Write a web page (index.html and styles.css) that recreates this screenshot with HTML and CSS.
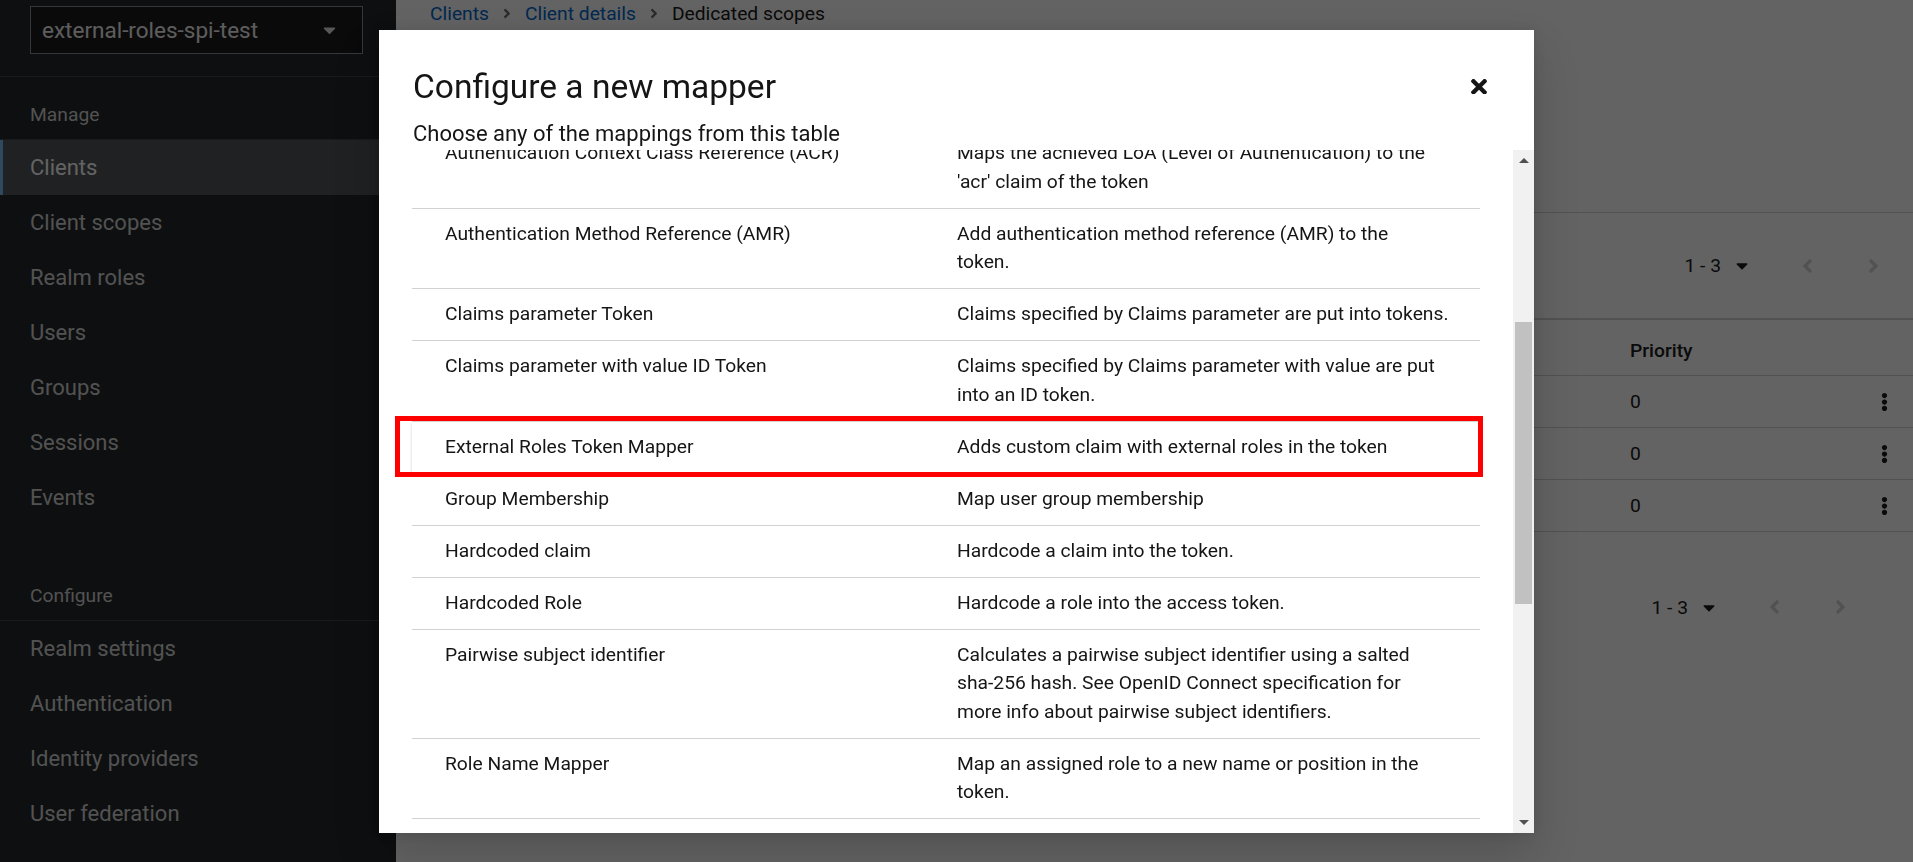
FILE: index.html
```html
<!DOCTYPE html>
<html lang="en">
<head>
<meta charset="utf-8">
<title>Dedicated scopes</title>
<link rel="stylesheet" href="styles.css">
</head>
<body>
<div class="page">
  <aside class="sidebar">
    <div class="realm-wrap">
      <div class="realm-select">
        <span>external-roles-spi-test</span>
        <svg class="caret" viewBox="0 0 320 512"><path d="M31.3 192h257.3c17.8 0 26.7 21.5 14.1 34.1L174.1 354.8c-7.8 7.8-20.5 7.8-28.3 0L17.2 226.1C4.6 213.5 13.5 192 31.3 192z"/></svg>
      </div>
    </div>
    <nav class="nav">
      <section class="nav-group">
        <div class="nav-title">Manage</div>
        <a class="nav-link current">Clients</a>
        <a class="nav-link">Client scopes</a>
        <a class="nav-link">Realm roles</a>
        <a class="nav-link">Users</a>
        <a class="nav-link">Groups</a>
        <a class="nav-link">Sessions</a>
        <a class="nav-link">Events</a>
      </section>
      <section class="nav-group second">
        <div class="nav-title">Configure</div>
        <a class="nav-link">Realm settings</a>
        <a class="nav-link">Authentication</a>
        <a class="nav-link">Identity providers</a>
        <a class="nav-link">User federation</a>
      </section>
    </nav>
  </aside>

  <main class="main">
    <div class="crumbs">
      <a class="crumb-link">Clients</a>
      <svg class="crumb-sep" viewBox="0 0 256 512"><path d="M224.3 273l-136 136c-9.4 9.4-24.6 9.4-33.9 0l-22.6-22.6c-9.4-9.4-9.4-24.6 0-33.9l96.4-96.4-96.4-96.4c-9.4-9.4-9.4-24.6 0-33.9L54.3 103c9.4-9.4 24.6-9.4 33.9 0l136 136c9.5 9.4 9.5 24.6.1 34z"/></svg>
      <a class="crumb-link">Client details</a>
      <svg class="crumb-sep" viewBox="0 0 256 512"><path d="M224.3 273l-136 136c-9.4 9.4-24.6 9.4-33.9 0l-22.6-22.6c-9.4-9.4-9.4-24.6 0-33.9l96.4-96.4-96.4-96.4c-9.4-9.4-9.4-24.6 0-33.9L54.3 103c9.4-9.4 24.6-9.4 33.9 0l136 136c9.5 9.4 9.5 24.6.1 34z"/></svg>
      <span class="crumb-current">Dedicated scopes</span>
    </div>
    <div class="page-header">
      <h1 class="page-title">external-roles-spi-test-dedicated</h1>
    </div>
    <div class="toolbar">
      <div class="pager top">
        <div class="pager-toggle"><span>1 - 3</span>
          <svg class="pg-caret" viewBox="0 0 320 512"><path d="M31.3 192h257.3c17.8 0 26.7 21.5 14.1 34.1L174.1 354.8c-7.8 7.8-20.5 7.8-28.3 0L17.2 226.1C4.6 213.5 13.5 192 31.3 192z"/></svg>
        </div>
        <div class="pg-btn"><svg viewBox="0 0 256 512"><path d="M31.7 239l136-136c9.4-9.4 24.6-9.4 33.9 0l22.6 22.6c9.4 9.4 9.4 24.6 0 33.9L127.9 256l96.4 96.4c9.4 9.4 9.4 24.6 0 33.9L201.7 409c-9.4 9.4-24.6 9.4-33.9 0l-136-136c-9.5-9.4-9.5-24.6-.1-34z"/></svg></div>
        <div class="pg-btn"><svg viewBox="0 0 256 512"><path d="M224.3 273l-136 136c-9.4 9.4-24.6 9.4-33.9 0l-22.6-22.6c-9.4-9.4-9.4-24.6 0-33.9l96.4-96.4-96.4-96.4c-9.4-9.4-9.4-24.6 0-33.9L54.3 103c9.4-9.4 24.6-9.4 33.9 0l136 136c9.5 9.4 9.5 24.6.1 34z"/></svg></div>
      </div>
    </div>
    <div class="mtable">
      <div class="mrow head"><span class="c-name">Name</span><span class="c-prio">Priority</span><span></span></div>
      <div class="mrow"><span class="c-name">acr loa level</span><span class="c-prio">0</span><span class="kebab"><svg viewBox="0 0 192 512"><path d="M96 184c39.8 0 72 32.2 72 72s-32.2 72-72 72-72-32.2-72-72 32.2-72 72-72zM24 80c0 39.8 32.2 72 72 72s72-32.2 72-72S135.8 8 96 8 24 40.2 24 80zm0 352c0 39.8 32.2 72 72 72s72-32.2 72-72-32.2-72-72-72-72 32.2-72 72z"/></svg></span></div>
      <div class="mrow"><span class="c-name">client roles</span><span class="c-prio">0</span><span class="kebab"><svg viewBox="0 0 192 512"><path d="M96 184c39.8 0 72 32.2 72 72s-32.2 72-72 72-72-32.2-72-72 32.2-72 72-72zM24 80c0 39.8 32.2 72 72 72s72-32.2 72-72S135.8 8 96 8 24 40.2 24 80zm0 352c0 39.8 32.2 72 72 72s72-32.2 72-72-32.2-72-72-72-72 32.2-72 72z"/></svg></span></div>
      <div class="mrow"><span class="c-name">external roles</span><span class="c-prio">0</span><span class="kebab"><svg viewBox="0 0 192 512"><path d="M96 184c39.8 0 72 32.2 72 72s-32.2 72-72 72-72-32.2-72-72 32.2-72 72-72zM24 80c0 39.8 32.2 72 72 72s72-32.2 72-72S135.8 8 96 8 24 40.2 24 80zm0 352c0 39.8 32.2 72 72 72s72-32.2 72-72-32.2-72-72-72-72 32.2-72 72z"/></svg></span></div>
    </div>
    <div class="pager bottom">
      <div class="pager-toggle"><span>1 - 3</span>
        <svg class="pg-caret" viewBox="0 0 320 512"><path d="M31.3 192h257.3c17.8 0 26.7 21.5 14.1 34.1L174.1 354.8c-7.8 7.8-20.5 7.8-28.3 0L17.2 226.1C4.6 213.5 13.5 192 31.3 192z"/></svg>
      </div>
      <div class="pg-btn"><svg viewBox="0 0 256 512"><path d="M31.7 239l136-136c9.4-9.4 24.6-9.4 33.9 0l22.6 22.6c9.4 9.4 9.4 24.6 0 33.9L127.9 256l96.4 96.4c9.4 9.4 9.4 24.6 0 33.9L201.7 409c-9.4 9.4-24.6 9.4-33.9 0l-136-136c-9.5-9.4-9.5-24.6-.1-34z"/></svg></div>
      <div class="pg-btn"><svg viewBox="0 0 256 512"><path d="M224.3 273l-136 136c-9.4 9.4-24.6 9.4-33.9 0l-22.6-22.6c-9.4-9.4-9.4-24.6 0-33.9l96.4-96.4-96.4-96.4c-9.4-9.4-9.4-24.6 0-33.9L54.3 103c9.4-9.4 24.6-9.4 33.9 0l136 136c9.5 9.4 9.5 24.6.1 34z"/></svg></div>
    </div>
  </main>
</div>

<div class="backdrop">
  <div class="modal">
    <header class="modal-head">
      <div class="modal-titles">
        <h2 class="modal-title">Configure a new mapper</h2>
        <p class="modal-desc">Choose any of the mappings from this table</p>
      </div>
      <button class="close-btn" aria-label="Close">
        <svg viewBox="0 85 352 342"><path d="M242.72 256l100.07-100.07c12.28-12.28 12.28-32.19 0-44.48l-22.24-22.24c-12.28-12.28-32.19-12.28-44.48 0L176 189.28 75.930 89.210c-12.28-12.28-32.19-12.28-44.48 0L9.21 111.45c-12.28 12.28-12.28 32.19 0 44.48L109.28 256 9.21 356.07c-12.28 12.28-12.28 32.19 0 44.48l22.24 22.24c12.28 12.28 32.2 12.28 44.48 0L176 322.72l100.07 100.07c12.28 12.28 32.2 12.28 44.48 0l22.24-22.24c12.28-12.28 12.28-32.19 0-44.48L242.72 256z"/></svg>
      </button>
    </header>
    <div class="modal-body">
      <div class="scroll-area">
        <div class="list">
          <div class="row"><div class="cell name">Authentication Context Class Reference (ACR)</div><div class="cell desc">Maps the achieved LoA (Level of Authentication) to the<br>'acr' claim of the token</div></div>
          <div class="row"><div class="cell name">Authentication Method Reference (AMR)</div><div class="cell desc">Add authentication method reference (AMR) to the<br>token.</div></div>
          <div class="row"><div class="cell name">Claims parameter Token</div><div class="cell desc">Claims specified by Claims parameter are put into tokens.</div></div>
          <div class="row"><div class="cell name">Claims parameter with value ID Token</div><div class="cell desc">Claims specified by Claims parameter with value are put<br>into an ID token.</div></div>
          <div class="row hovered"><div class="cell name">External Roles Token Mapper</div><div class="cell desc">Adds custom claim with external roles in the token</div></div>
          <div class="row"><div class="cell name">Group Membership</div><div class="cell desc">Map user group membership</div></div>
          <div class="row"><div class="cell name">Hardcoded claim</div><div class="cell desc">Hardcode a claim into the token.</div></div>
          <div class="row"><div class="cell name">Hardcoded Role</div><div class="cell desc">Hardcode a role into the access token.</div></div>
          <div class="row"><div class="cell name">Pairwise subject identifier</div><div class="cell desc">Calculates a pairwise subject identifier using a salted<br>sha-256 hash. See OpenID Connect specification for<br>more info about pairwise subject identifiers.</div></div>
          <div class="row"><div class="cell name">Role Name Mapper</div><div class="cell desc">Map an assigned role to a new name or position in the<br>token.</div></div>
          <div class="row"><div class="cell name">User Address</div><div class="cell desc">Maps user address attributes (street, locality, region,<br>postal_code, and country) to the OpenID Connect<br>'address' claim.</div></div>
        </div>
        <div class="annotation"></div>
      </div>
      <div class="scrollbar">
        <div class="sb-btn"><span class="tri up"></span></div>
        <div class="sb-track"><div class="sb-thumb"></div></div>
        <div class="sb-btn"><span class="tri down"></span></div>
      </div>
    </div>
  </div>
</div>
</body>
</html>
```

FILE: styles.css
```css
* { box-sizing: border-box; }
html, body { margin: 0; padding: 0; }
body {
  width: 1913px;
  height: 862px;
  overflow: hidden;
  font-family: Roboto, "Liberation Sans", sans-serif;
  color: #151515;
  background: #fff;
}
a { text-decoration: none; }

.page { display: flex; height: 862px; }

/* ---------- sidebar ---------- */
.sidebar {
  width: 396px;
  flex: 0 0 396px;
  background: #212427;
  display: flex;
  flex-direction: column;
}
.realm-wrap {
  padding: 6px 33px 22px 30px;
  border-bottom: 1px solid #3c3f42;
}
.realm-select {
  height: 48px;
  border: 1px solid #8a8d90;
  background: #151515;
  display: flex;
  align-items: center;
  justify-content: space-between;
  padding: 0 26px 0 11px;
  color: #f0f0f0;
  font-size: 22.5px;
}
.realm-select .caret { width: 13px; height: 20px; fill: #e0e0e0; }

.nav { display: flex; flex-direction: column; }
.nav-group { display: flex; flex-direction: column; }
.nav-group.second { margin-top: 33px; }
.nav-title {
  padding: 24px 0 11px 30px;
  line-height: 28px;
  font-size: 19.25px;
  color: #d2d2d2;
  border-bottom: 1px solid #3c3f42;
  height: 63px;
}
.nav-link {
  height: 55px;
  display: flex;
  align-items: center;
  padding-left: 30px;
  font-size: 22px;
  color: #d2d2d2;
}
.nav-link.current {
  background: #4f5255;
  color: #fff;
  box-shadow: inset 3px 0 0 #73bcf7;
}

/* ---------- main (behind the modal) ---------- */
.main { flex: 1; display: flex; flex-direction: column; background: #fff; }
.crumbs {
  height: 26px;
  flex: 0 0 26px;
  padding-left: 34px;
  display: flex;
  align-items: center;
  font-size: 19.25px;
  gap: 14px;
}
.crumb-link { color: #06c; }
.crumb-current { color: #151515; }
.crumb-sep { width: 8px; height: 15px; fill: #6a6e73; }
.page-header {
  height: 187px;
  flex: 0 0 187px;
  border-bottom: 1px solid #d2d2d2;
  padding: 30px 34px;
}
.page-title { margin: 0; font-size: 33px; font-weight: 400; }

.toolbar {
  height: 107px;
  flex: 0 0 107px;
  border-bottom: 2px solid #d2d2d2;
  display: flex;
  align-items: center;
  justify-content: flex-end;
  padding-right: 7px;
}
.pager { display: flex; align-items: center; font-size: 19.25px; }
.pager-toggle {
  display: flex;
  align-items: center;
  gap: 15px;
  padding-right: 26px;
  height: 44px;
}
.pg-caret { width: 12px; height: 19px; fill: #151515; }
.pg-btn {
  width: 66px;
  height: 44px;
  display: flex;
  align-items: center;
  justify-content: center;
}
.pg-btn svg { width: 11px; height: 22px; fill: #d2d2d2; }
.pager.bottom { justify-content: flex-end; padding-right: 40px; margin-top: 53px; }

.mtable { display: flex; flex-direction: column; }
.mrow {
  display: grid;
  grid-template-columns: 1fr 225px 58px;
  height: 52px;
  align-items: center;
  border-bottom: 1px solid #d2d2d2;
  font-size: 19.25px;
}
.mrow.head { height: 56px; padding-top: 5px; font-weight: 500; }
.c-name { padding-left: 34px; }
.kebab { display: flex; justify-content: center; }
.kebab svg { width: 7px; height: 22px; fill: #151515; }

/* ---------- modal overlay ---------- */
.backdrop {
  position: fixed;
  inset: 0;
  background: rgba(3, 3, 3, 0.62);
  display: flex;
  align-items: center;
  justify-content: center;
  z-index: 10;
}
.modal {
  width: 1155px;
  height: 803px;
  background: #fff;
  display: flex;
  flex-direction: column;
  box-shadow: 0 22px 44px 0 rgba(3, 3, 3, 0.16), 0 0 11px 0 rgba(3, 3, 3, 0.1);
}
.modal-head {
  display: flex;
  justify-content: space-between;
  align-items: flex-start;
  padding: 33px 33px 0 34px;
  height: 120px;
  flex: 0 0 120px;
}
.modal-title {
  margin: 0;
  font-size: 33.5px;
  line-height: 48px;
  font-weight: 400;
  color: #151515;
}
.modal-desc {
  margin: 6px 0 0;
  font-size: 22px;
  line-height: 33px;
  color: #151515;
}
.close-btn {
  width: 44px;
  height: 48px;
  border: 0;
  background: transparent;
  padding: 0;
  display: flex;
  align-items: center;
  justify-content: center;
}
.close-btn svg { width: 16px; height: 15.5px; fill: #151515; }

.modal-body { flex: 1; display: flex; min-height: 0; }
.scroll-area {
  flex: 1;
  overflow: hidden;
  padding: 0 33px;
  position: relative;
}
.list { margin-top: -21.5px; display: flex; flex-direction: column; }
.row {
  display: grid;
  grid-template-columns: 523px 1fr;
  border-bottom: 1px solid #d2d2d2;
  font-size: 19.25px;
  line-height: 28.5px;
  color: #151515;
  background: #fff;
}
.cell { padding: 11.25px 22px 11.25px 33px; }
.cell.desc { padding: 11.25px 20px 11.25px 22px; white-space: nowrap; }
.row.hovered {
  position: relative;
  z-index: 1;
  border-bottom-color: transparent;
  box-shadow: 0 -1px 0 0 #d2d2d2, 0 1px 3px 0 rgba(3, 3, 3, 0.12), 0 0 3px 0 rgba(3, 3, 3, 0.06);
}

/* red highlight annotation drawn over the hovered row */
.annotation {
  position: absolute;
  top: 266px;
  left: 16px;
  width: 1088px;
  height: 61px;
  border: 5px solid #ff0000;
  z-index: 2;
}

.scrollbar {
  width: 21px;
  flex: 0 0 21px;
  background: #f1f1f1;
  display: flex;
  flex-direction: column;
}
.sb-btn {
  height: 21px;
  flex: 0 0 21px;
  display: flex;
  align-items: center;
  justify-content: center;
}
.tri { width: 0; height: 0; border-left: 5px solid transparent; border-right: 5px solid transparent; }
.tri.up { border-bottom: 5px solid #505050; }
.tri.down { border-top: 5px solid #505050; }
.sb-track { flex: 1; }
.sb-thumb {
  margin: 151px 2px 0;
  height: 282px;
  background: #c1c1c1;
}
```
